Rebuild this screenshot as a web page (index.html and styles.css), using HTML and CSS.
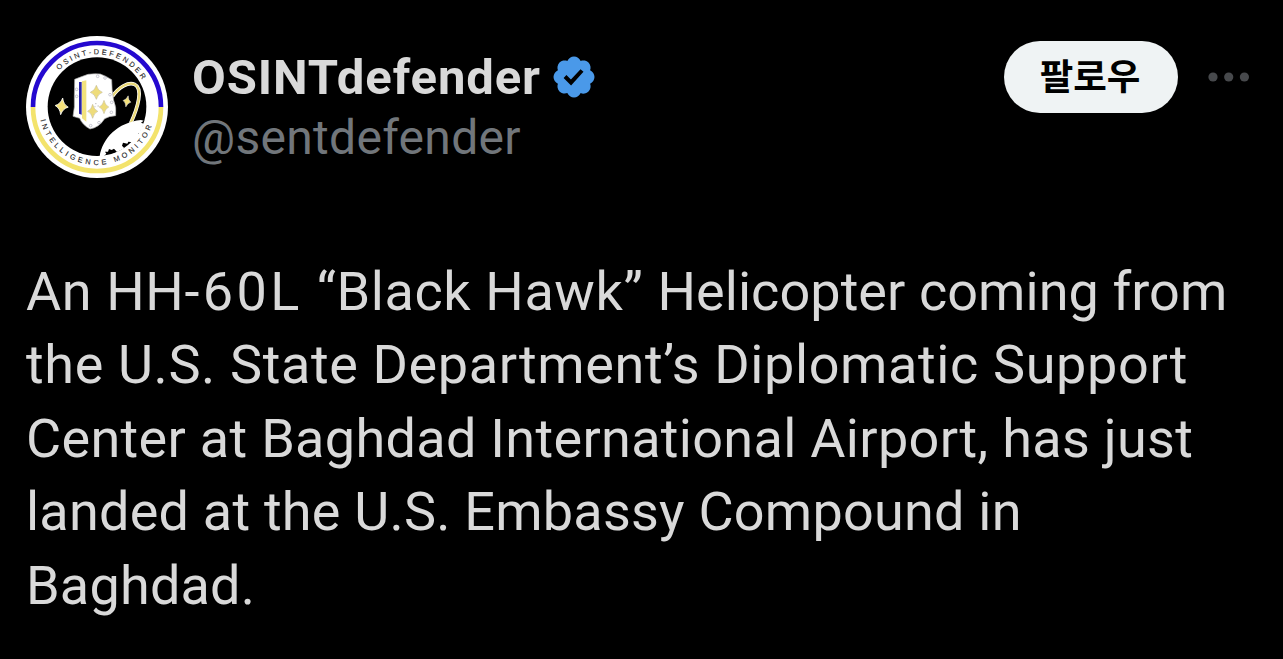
FILE: index.html
```
<!DOCTYPE html>
<html lang="ko">
<head>
  <meta charset="utf-8">
  <title>OSINTdefender</title>
  <link rel="stylesheet" href="styles.css">
</head>
<body>
  <article class="post">
    <header class="header">
      <svg class="avatar" viewBox="27 27 426 426">
        <defs>
          <path id="arc-top" d="M126.3 130.2 A158 158 0 0 1 376.1 159.8" />
          <path id="arc-bottom" d="M70.5 279.1 A174 174 0 0 0 406 292" />
          <path id="star" d="M0 -21 Q4 -5 18 0 Q4 5 0 21 Q-4 5 -18 0 Q-4 -5 0 -21Z" />
        </defs>
        <circle cx="240" cy="240" r="213" fill="#fff" />
        <!-- blue and yellow ring -->
        <path d="M48 240 A192 192 0 0 1 432 240" fill="none" stroke="#2408cf" stroke-width="14" />
        <path d="M48 240 A192 192 0 0 0 432 240" fill="none" stroke="#f3e36c" stroke-width="14" />
        <circle cx="240" cy="239" r="148" fill="#000" />
        <!-- orbit -->
        <path d="M286 208 C306 180 334 164 353 172 C379 184 363 241 341 289" fill="none" stroke="#fff" stroke-width="11" />
        <path d="M286 208 C306 180 334 164 353 172 C379 184 363 241 341 289" fill="none" stroke="#ead978" stroke-width="7" />
        <!-- planet -->
        <path d="M248 388 C256 334 302 286 372 279 L380 281 L372 287 L384 292 L376 298 L380 306 L371 309 L373 316 L363 319 L366 328 L358 333 L348 346 L334 344 L331 350 L318 347 L315 356 L322 364 L300 375 L291 365 L284 369 L276 366 L273 374 L264 374 L268 380 L260 388Z" fill="#fff" />
        <text class="ring-text"><textPath href="#arc-top" textLength="289">OSINT-DEFENDER</textPath></text>
        <text class="ring-text"><textPath href="#arc-bottom" textLength="448">INTELLIGENCE MONITOR</textPath></text>
        <!-- shield -->
        <path d="M173 157 Q193 149 213 142 Q232 139 250 141 Q267 147 284 158 Q284 190 290 220 Q299 241 296 266 Q276 267 263 275 Q247 301 219 306 Q196 294 188 274 L168 268 Q174 240 172 210Z" fill="#fff" stroke="#aaa" stroke-width="2" />
        <path d="M186 165 H194 V263 L186 260Z" fill="#2c25a8" />
        <path d="M195 163 L208 160 V284 L195 274Z" fill="#f2e27c" />
        <g fill="#fff" stroke="#99a" stroke-width="1.5">
          <circle cx="179" cy="187" r="4" />
          <circle cx="179" cy="208" r="4" />
          <circle cx="242" cy="148" r="4" />
          <circle cx="264" cy="153" r="4" />
          <circle cx="279" cy="203" r="4" />
          <circle cx="284" cy="226" r="4" />
          <circle cx="283" cy="256" r="4" />
          <circle cx="246" cy="287" r="4" />
          <circle cx="221" cy="296" r="4" />
        </g>
        <g fill="#eedc7b" stroke="#b5ab7c" stroke-width="1.5">
          <use href="#star" x="238" y="196" />
          <use href="#star" transform="translate(227 253) scale(.85 1)" />
          <use href="#star" transform="translate(261 240) scale(.8 .95)" />
        </g>
        <path d="M235 230 h3 M242 237 h3 M233 239 h2" stroke="#777" stroke-width="2" />
        <g fill="#f6e27b" stroke="#fff" stroke-width="2">
          <use href="#star" transform="translate(134 238) rotate(7) scale(1.1 1.2)" />
          <use href="#star" transform="translate(330 223) rotate(12) scale(.65 .8)" />
        </g>
      </svg>
      <div class="user">
        <div class="name-row">
          <span class="name">OSINTdefender</span>
          <svg class="badge" viewBox="0 0 22 22">
            <path fill="#4a99e9" d="M20.396 11c-.018-.646-.215-1.275-.57-1.816-.354-.54-.852-.972-1.438-1.246.223-.607.27-1.264.14-1.897-.131-.634-.437-1.218-.882-1.687-.47-.445-1.053-.75-1.687-.882-.633-.13-1.29-.083-1.897.14-.273-.587-.704-1.086-1.245-1.44S11.647 1.62 11 1.604c-.646.017-1.273.213-1.813.568s-.969.854-1.24 1.44c-.608-.223-1.267-.272-1.902-.14-.635.13-1.22.436-1.69.882-.445.47-.749 1.055-.878 1.688-.13.633-.08 1.29.144 1.896-.587.274-1.087.705-1.443 1.245-.356.54-.555 1.17-.574 1.817.02.647.218 1.276.574 1.817.356.54.856.972 1.443 1.245-.224.606-.274 1.263-.144 1.896.13.634.433 1.218.877 1.688.47.443 1.054.747 1.687.878.633.132 1.29.084 1.897-.136.274.586.705 1.084 1.246 1.439.54.354 1.17.551 1.816.569.647-.016 1.276-.213 1.817-.567s.972-.854 1.245-1.44c.604.239 1.266.296 1.903.164.636-.132 1.22-.447 1.68-.907.46-.46.776-1.044.908-1.681s.075-1.299-.165-1.903c.586-.274 1.084-.705 1.439-1.246.354-.54.551-1.17.569-1.816zM9.662 14.85l-3.429-3.428 1.293-1.302 2.072 2.072 4.4-4.794 1.347 1.246z" />
          </svg>
        </div>
        <div class="handle">@sentdefender</div>
      </div>
      <button class="follow">팔로우</button>
      <svg class="more" viewBox="0 0 42 10">
        <circle cx="5" cy="5" r="4.6" />
        <circle cx="20.7" cy="5" r="4.6" />
        <circle cx="36.4" cy="5" r="4.6" />
      </svg>
    </header>
    <p class="text">
      <span class="line">An HH<span class="model">-60L</span> “Black Hawk” <span class="tight">Helicopter coming from</span></span>
      <span class="line">the U.S. State Department’s Diplomatic Support</span>
      <span class="line">Center at Baghdad International Airport, has just</span>
      <span class="line">landed at the U.S. Embassy Compound in</span>
      <span class="line">Baghdad.</span>
    </p>
  </article>
</body>
</html>
```
FILE: styles.css
```
body {
  margin: 0;
  background: #000;
  color: #d9d9d9;
  font-family: Roboto, "Noto Sans CJK KR", sans-serif;
  overflow: hidden;
}

.post {
  padding: 36px 26px 0;
}

.header {
  display: flex;
  align-items: flex-start;
  height: 142px;
}

.avatar {
  width: 142px;
  height: 142px;
  flex: none;
}

.ring-text {
  font: 22px "Liberation Sans", Arial, sans-serif;
  fill: #222;
  stroke: #222;
  stroke-width: 0.3px;
}

.user {
  flex: 1;
  margin: 11px 0 0 24px;
}

.name-row {
  display: flex;
  align-items: center;
  height: 60px;
}

.name {
  padding-top: 2px;
  font-size: 49px;
  font-weight: 700;
  line-height: 60px;
  letter-spacing: 0.9px;
}

.badge {
  width: 48px;
  height: 48px;
  margin-left: 9px;
}

.handle {
  padding-top: 1px;
  font-size: 48px;
  line-height: 60px;
  letter-spacing: 0.3px;
  color: #71767b;
}

.follow {
  width: 174px;
  height: 72px;
  margin-top: 5px;
  padding: 0 2px 4px 0;
  border: 0;
  border-radius: 36px;
  background: #eff3f4;
  color: #000;
  font: 700 36.5px/68px "Noto Sans CJK KR", sans-serif;
}

.more {
  width: 42px;
  height: 10px;
  margin: 36px 6px 0 30px;
  fill: #47494c;
}

.follow + .more {
  margin-right: 7px;
}

.text {
  margin: 77px 0 0;
  font-size: 54px;
  line-height: 73.4px;
}

.line {
  display: block;
  white-space: nowrap;
}

.line:nth-child(1) { letter-spacing: 0.6px; }
.line:nth-child(2) { letter-spacing: 0.62px; }
.line:nth-child(3) { letter-spacing: 0.31px; }
.line:nth-child(4) { letter-spacing: 0.22px; }
.line:nth-child(5) { letter-spacing: 0.2px; }

.line .model { letter-spacing: 3.4px; }
.line .tight { letter-spacing: 0.06px; }
```
